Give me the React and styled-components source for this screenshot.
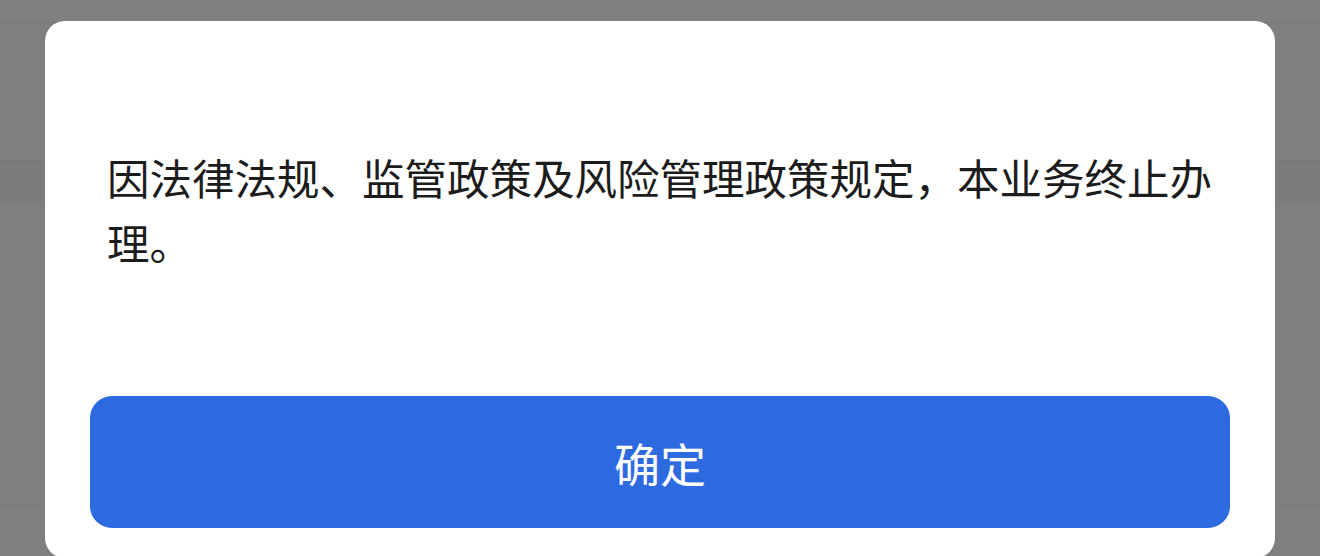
import React from 'react';
import styled, { createGlobalStyle } from 'styled-components';

const GlobalStyle = createGlobalStyle`
  html, body {
    margin: 0;
    padding: 0;
    height: 100%;
    overflow: hidden;
    background: #ffffff;
    font-family: "Noto Sans CJK SC", "Noto Sans", sans-serif;
  }
`;

// page that sits under the dim layer
const Page = styled.div`
  height: 556px;
  display: flex;
  flex-direction: column;
  background: #ffffff;
`;

const PageRow = styled.div`
  height: ${(p) => p.$h}px;
  background: ${(p) => p.$bg || '#ffffff'};
  border-bottom: ${(p) => (p.$line ? '1px solid #ececec' : 'none')};
  box-sizing: border-box;
  flex-shrink: 0;
`;

const Mask = styled.div`
  position: fixed;
  inset: 0;
  background: rgba(0, 0, 0, 0.5);
  display: flex;
  justify-content: center;
  align-items: flex-start;
  padding-top: 21px;
`;

const Dialog = styled.div`
  width: 1230px;
  height: 537px;
  background: #ffffff;
  border-radius: 20px;
  box-sizing: border-box;
  padding: 0 45px 30px;
  display: flex;
  flex-direction: column;
`;

const Body = styled.div`
  flex: 1;
  display: flex;
  align-items: center;
  padding: 0 10px 0 17px;
`;

const Message = styled.p`
  margin: 0;
  font-size: 42.5px;
  line-height: 65px;
  color: #1c1c1c;
  font-weight: 400;
`;

const ConfirmButton = styled.button`
  height: 132px;
  width: 100%;
  border: none;
  border-radius: 22px;
  background: #2d6ae0;
  color: #ffffff;
  font-family: "Noto Sans CJK SC", "Noto Sans", sans-serif;
  font-size: 46px;
  cursor: pointer;
  flex-shrink: 0;
`;

export default function App() {
  return (
    <>
      <GlobalStyle />
      <Page>
        <PageRow $h={23} $line />
        <PageRow $h={138} $line />
        <PageRow $h={44} $bg="#f9f9f9" />
        <PageRow $h={301} $line />
        <PageRow $h={50} />
      </Page>
      <Mask>
        <Dialog>
          <Body>
            <Message>因法律法规、监管政策及风险管理政策规定，本业务终止办理。</Message>
          </Body>
          <ConfirmButton>确定</ConfirmButton>
        </Dialog>
      </Mask>
    </>
  );
}
